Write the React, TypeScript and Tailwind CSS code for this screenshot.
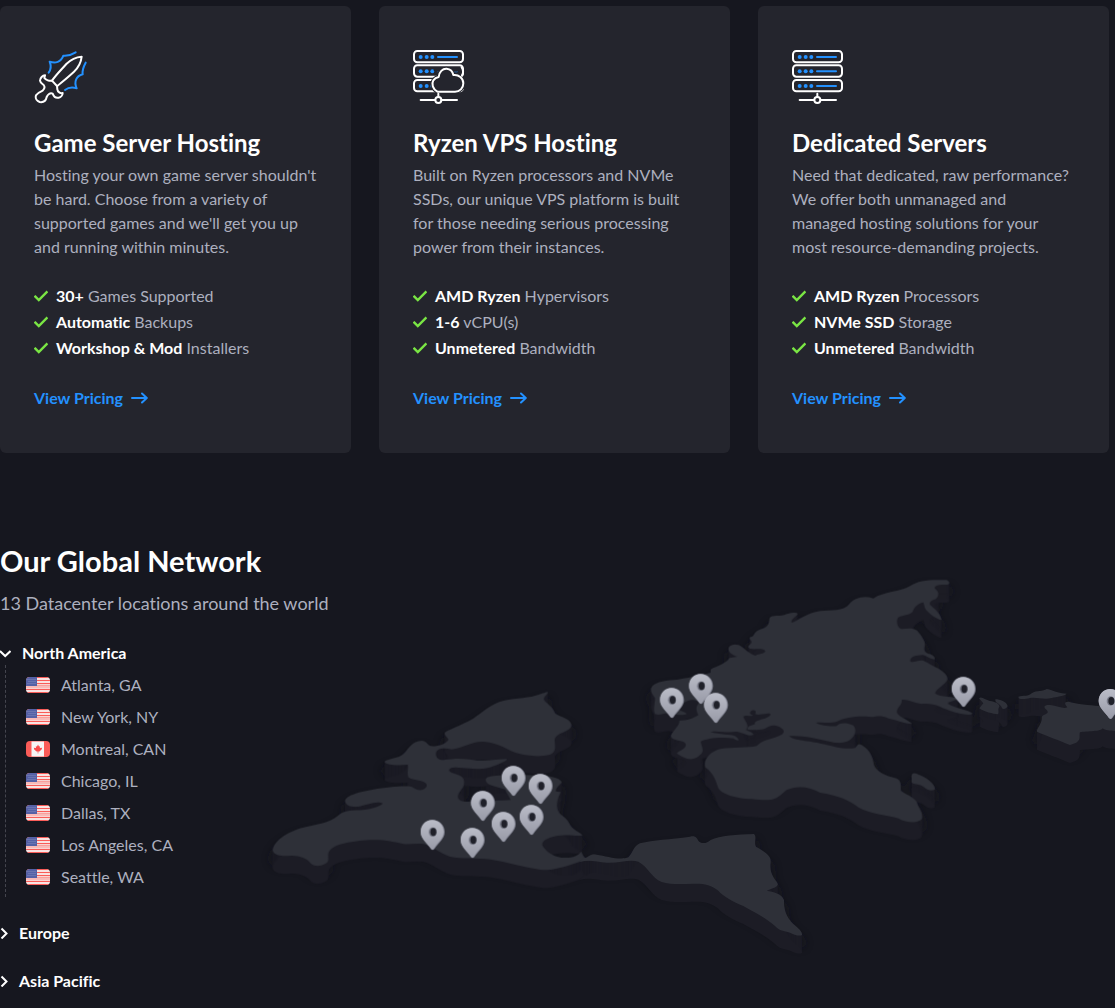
import { useState } from 'react';
import type { ReactNode } from 'react';

interface Feature {
  strong: string;
  rest: string;
}

interface Plan {
  title: string;
  icon: ReactNode;
  description: string;
  features: Feature[];
}

interface Region {
  name: string;
  locations: { city: string; country: 'us' | 'ca' }[];
}

function SwordIcon() {
  return (
    <svg viewBox="102 150 162 162" className="h-[54px] w-[54px]" fill="none" strokeWidth="6" strokeLinecap="round" strokeLinejoin="round" aria-hidden="true">
      <g stroke="#2391ff">
        <path d="M146 218C153 209 154 198 149 185C166 191 183 187 190 167C202 168 216 164 227 157" />
        <path d="M257 188C251 199 246 211 248 223C229 228 221 245 230 265C217 261 204 263 195 270" />
      </g>
      <g stroke="#ffffff">
        <path d="M156 242C170 222 185 208 199 192C211 180 228 171 245 170C243 188 235 203 222 215C207 229 191 242 172 258" />
        <path d="M135 226C128 226 120 234 120 242C121 249 127 252 131 255C135 260 134 266 128 272C121 275 113 278 108 286C105 295 111 303 119 306C131 308 138 301 140 291C143 284 150 277 158 281C161 289 168 295 176 293C183 292 188 285 188 279C181 281 173 276 172 268L171 258L156 242C149 244 137 240 133 234Z" />
      </g>
    </svg>
  );
}

function ServerRow({ y }: { y: number }) {
  return (
    <>
      <rect x="2" y={y} width="147" height="34" rx="10" stroke="#ffffff" />
      <path d={`M74 ${y + 18}H131`} stroke="#2391ff" />
      <g fill="#2391ff">
        <circle cx="22" cy={y + 18} r="6" />
        <circle cx="40" cy={y + 18} r="6" />
        <circle cx="57" cy={y + 18} r="6" />
      </g>
    </>
  );
}

function ServerIcon({ cloud = false }: { cloud?: boolean }) {
  return (
    <svg viewBox="-1 0 156 162" className="h-[54px] w-[52px]" fill="none" strokeWidth="6" strokeLinecap="round" strokeLinejoin="round" aria-hidden="true">
      <ServerRow y={3} />
      <ServerRow y={46} />
      <ServerRow y={90} />
      {cloud && (
        <>
          <path d="M72 125C58 117 54 102 60 91C64 85 70 82 76 81C77 66 88 55 100 56C111 57 118 65 120 75C136 73 150 84 150 100C150 115 139 125 125 125Z" fill="#24252d" stroke="#24252d" strokeWidth="12" />
          <path d="M66 61H131" stroke="#24252d" strokeWidth="9" />
          <path d="M145 52C150 60 150 70 146 77" stroke="#ffffff" />
          <path d="M72 125C58 117 54 102 60 91C64 85 70 82 76 81C77 66 88 55 100 56C111 57 118 65 120 75C136 73 150 84 150 100C150 115 139 125 125 125Z" stroke="#ffffff" />
        </>
      )}
      <g stroke="#ffffff">
        <path d="M75 131V140M22 150H65M85 150H131" />
        <circle cx="75" cy="150" r="9" />
      </g>
    </svg>
  );
}

const PLANS: Plan[] = [
  {
    title: 'Game Server Hosting',
    icon: <SwordIcon />,
    description: "Hosting your own game server shouldn't be hard. Choose from a variety of supported games and we'll get you up and running within minutes.",
    features: [
      { strong: '30+', rest: 'Games Supported' },
      { strong: 'Automatic', rest: 'Backups' },
      { strong: 'Workshop & Mod', rest: 'Installers' },
    ],
  },
  {
    title: 'Ryzen VPS Hosting',
    icon: <ServerIcon cloud />,
    description: 'Built on Ryzen processors and NVMe SSDs, our unique VPS platform is built for those needing serious processing power from their instances.',
    features: [
      { strong: 'AMD Ryzen', rest: 'Hypervisors' },
      { strong: '1-6', rest: 'vCPU(s)' },
      { strong: 'Unmetered', rest: 'Bandwidth' },
    ],
  },
  {
    title: 'Dedicated Servers',
    icon: <ServerIcon />,
    description: 'Need that dedicated, raw performance? We offer both unmanaged and managed\u00a0hosting solutions for your most\u00a0resource-demanding projects.',
    features: [
      { strong: 'AMD Ryzen', rest: 'Processors' },
      { strong: 'NVMe SSD', rest: 'Storage' },
      { strong: 'Unmetered', rest: 'Bandwidth' },
    ],
  },
];

const REGIONS: Region[] = [
  {
    name: 'North America',
    locations: [
      { city: 'Atlanta, GA', country: 'us' },
      { city: 'New York, NY', country: 'us' },
      { city: 'Montreal, CAN', country: 'ca' },
      { city: 'Chicago, IL', country: 'us' },
      { city: 'Dallas, TX', country: 'us' },
      { city: 'Los Angeles, CA', country: 'us' },
      { city: 'Seattle, WA', country: 'us' },
    ],
  },
  { name: 'Europe', locations: [] },
  { name: 'Asia Pacific', locations: [] },
];

function PlanCard({ plan }: { plan: Plan }) {
  return (
    <article className="rounded-md bg-[#24252d] px-[34px] pt-11 pb-[43px]">
      {plan.icon}
      <h3 className="mt-6 text-2xl leading-[30px] font-bold text-white">{plan.title}</h3>
      <p className="mt-[5px] text-base leading-6">{plan.description}</p>
      <ul className="mt-6 leading-[26px]">
        {plan.features.map(f => (
          <li key={f.strong} className="flex items-center gap-2">
            <svg viewBox="0 0 14 12" className="h-3 w-3.5 shrink-0" fill="none" stroke="#7ae644" strokeWidth="2.4" strokeLinecap="square" aria-hidden="true">
              <path d="M1.4 6.6L4.8 10L12.6 2.2" />
            </svg>
            <span>
              <strong className="font-bold text-white">{f.strong}</strong> {f.rest}
            </span>
          </li>
        ))}
      </ul>
      <a href="#pricing" className="mt-[25px] inline-flex items-center gap-2 leading-6 font-bold text-[#2391ff]">
        View Pricing
        <svg viewBox="0 0 17 12" className="h-3 w-[17px]" fill="none" stroke="currentColor" strokeWidth="2" strokeLinecap="round" strokeLinejoin="round" aria-hidden="true">
          <path d="M1 6H15.5M11 1.5L15.8 6L11 10.5" />
        </svg>
      </a>
    </article>
  );
}

function Flag({ country }: { country: 'us' | 'ca' }) {
  if (country === 'ca') {
    return (
      <svg viewBox="0 0 24 16" className="h-4 w-6 overflow-hidden rounded-sm" aria-hidden="true">
        <path d="M0 0H24V16H0Z" fill="#fa5c58" />
        <path d="M5.5 0.5H18V15.5H5.5Z" fill="#f5f5f5" />
        <path d="M12 3.5L13 5.5L14 5.2L13.8 7L16.2 6.8L15.6 8.6L13.4 10.4H12.3V12.5H11.7V10.4H10.6L8.2 8.6L7.8 6.8L10 7L9.8 5.2L11 5.5Z" fill="#fa4a4a" />
      </svg>
    );
  }
  return (
    <svg viewBox="0 0 24 16" className="h-4 w-6 overflow-hidden rounded-sm" aria-hidden="true">
      <path d="M0 0H24V16H0Z" fill="#f8d4d2" />
      <path d="M0 0.5H24M0 3.5H24M0 6.5H24M0 12.5H24M0 15.5H24" stroke="#fa5c58" />
      <path d="M0 8.5H24M0 10H24" stroke="#f9a09d" />
      <path d="M0 14H24M11 2H24M11 5H24" stroke="#faf0f0" />
      <path d="M0 0H11V9H0Z" fill="#5561a6" />
      <path d="M1.5 2.5H10M2.5 4.5H10M1.5 6.5H10" stroke="#8088bd" strokeDasharray="1 1" />
    </svg>
  );
}

// Land outlines, drawn in thirds of a pixel
const NORTH_AMERICA =
  'M38 512C40 480 90 450 140 440C190 430 215 425 240 402C255 388 290 392 320 388C345 384 365 375 368 370C350 362 320 376 295 380C275 382 256 378 255 362C258 345 300 335 340 328C380 322 430 316 455 320C465 325 470 332 485 330C500 326 505 315 495 308C480 298 455 300 445 292C440 280 446 265 443 254C420 256 380 258 373 245C385 235 415 236 430 222C445 208 455 182 485 182C500 183 503 195 512 198C530 200 560 192 565 178C560 170 552 165 554 158C560 150 600 138 640 115C670 95 695 70 730 62C770 53 810 54 835 44C848 40 862 35 863 36C865 42 850 50 852 58C855 68 875 75 883 95C885 108 915 108 930 125C938 135 935 145 920 152C905 160 885 165 884 180C885 200 890 215 870 224C850 230 815 230 780 222C740 212 720 188 670 185C630 185 610 205 575 208C555 205 535 202 528 218C526 232 535 240 550 240C575 236 600 234 630 238C670 246 710 238 740 237C745 240 720 252 690 262C660 270 630 266 605 264C585 261 570 262 567 270C568 280 590 280 605 290C615 298 613 310 610 320C600 335 590 345 595 355C600 365 615 366 630 364C680 362 720 362 752 360C748 350 740 340 735 328C715 322 690 318 680 308C672 296 680 290 700 288C740 284 800 284 860 288C890 292 905 300 905 308C895 318 885 328 888 334L902 336C900 345 888 360 892 385C895 405 920 410 928 430C935 448 960 455 968 466C950 470 920 462 890 468C860 474 842 485 848 498C858 515 880 530 905 533C935 535 955 528 963 515C968 520 970 533 978 534C985 530 988 524 1005 524L1005 540C985 541 975 542 960 545C920 560 870 574 840 569C790 562 740 545 690 538C650 533 600 538 570 530C540 520 510 495 490 492C470 488 450 495 430 492C400 485 370 478 330 480C280 484 215 490 205 520C203 535 210 545 195 552C180 560 160 560 150 548C140 535 120 528 95 527C70 528 45 530 38 512Z';
const SOUTH_AMERICA =
  'M10 264L18 264C28 260 32 252 50 254C80 258 120 272 145 262C158 250 160 228 180 220C220 210 270 208 330 200C348 196 350 205 355 212C362 222 380 222 392 210C420 196 470 194 522 192C532 200 520 218 528 230C545 240 575 255 572 275C568 300 575 315 592 338C600 350 575 355 560 362C580 366 605 370 612 390C612 420 618 440 640 462C655 475 668 485 666 495C660 500 640 494 630 488C610 482 600 484 585 468C560 445 520 425 490 408C460 395 430 380 415 362C395 345 370 340 340 341C310 342 275 345 245 336C215 325 205 290 175 275C150 266 120 280 80 278C50 276 30 268 0 275Z';
const EURASIA =
  'M33 355C38 338 70 332 100 330C140 325 180 315 212 308L212 298C230 288 260 280 268 264L292 260C275 255 262 245 266 232C275 220 295 222 305 230C318 240 335 255 347 257C350 250 365 255 376 244C370 232 345 240 330 236C320 230 325 228 333 220C340 210 318 205 335 200C345 195 340 185 360 178C380 172 388 165 388 145C395 132 420 142 440 132C455 128 472 126 473 132C470 140 450 150 455 158C475 152 500 128 540 123C570 120 610 125 628 102C640 85 670 75 700 85C730 65 780 65 810 48C835 30 870 28 920 30C932 36 930 44 918 44C900 44 880 46 885 56C900 65 898 85 880 90C870 94 868 100 870 104C880 115 900 125 905 150C890 148 865 130 855 115L850 97C840 98 825 108 820 120C818 135 790 135 775 142C768 150 770 172 785 177C800 175 820 172 832 182C842 195 855 210 855 225C850 240 853 248 870 252C880 256 886 262 884 268C870 268 860 258 848 255C830 256 808 260 811 274C820 280 835 268 850 272C865 278 880 290 895 295C910 305 925 315 922 330C915 345 890 355 885 370C900 382 945 378 955 386C940 395 920 395 925 402C945 415 985 420 998 430C990 442 930 425 900 410C880 402 860 400 845 402C820 398 795 385 785 390C788 405 768 415 771 428C775 440 815 455 816 462C790 460 770 450 745 445C720 435 710 440 700 441C670 437 620 438 590 455C570 462 545 455 528 458C545 468 575 470 590 468C595 460 615 455 640 466C652 480 645 500 630 510C610 522 590 520 570 515C530 505 480 495 448 498C455 510 500 512 540 520C580 528 615 540 645 534C652 525 655 518 665 525C690 540 698 560 702 585C710 605 735 618 770 625C785 632 782 645 783 662C795 672 820 680 830 695C835 715 850 725 846 745C838 760 800 760 775 745C740 735 690 732 655 712C625 690 600 678 540 668C510 650 470 645 440 660C425 672 410 690 385 690C340 688 260 688 235 655C228 635 222 610 196 592C188 570 210 545 240 537C280 530 320 535 350 528C365 512 385 508 405 502C430 495 438 485 425 475C405 462 395 465 375 476C350 482 330 480 322 478C325 465 330 470 345 462C340 455 355 450 375 445C395 438 395 430 385 430C365 432 355 436 345 432C350 424 345 418 335 422C326 428 330 434 340 436C330 442 320 432 310 440C315 455 330 465 318 480C330 485 342 490 340 495C325 500 315 490 290 485C260 490 225 480 212 486C240 495 275 492 285 498C300 508 300 518 280 505C240 500 200 505 182 515C185 530 195 545 180 555C165 572 140 572 110 550C120 540 140 535 137 522C130 508 95 515 92 498C100 480 120 465 118 452C140 452 160 445 175 435C168 425 165 405 180 398C165 385 145 388 130 400L108 412C120 425 140 425 140 432C125 440 100 430 90 430C70 428 60 438 45 432C38 420 45 400 45 385C40 375 32 370 33 355Z';
const MADAGASCAR = 'M815 625C812 610 820 606 835 613C860 622 885 640 885 658C875 665 860 660 850 650C840 642 825 645 815 638Z';
const ISLANDS =
  'M237 385C245 378 255 390 270 393C285 395 300 402 298 410C292 418 298 425 294 433C280 432 250 425 238 415L250 400ZM286 388C300 388 320 395 323 408C320 418 305 420 305 412C300 400 285 400 286 388ZM355 380C370 376 385 380 395 370C410 360 430 365 440 357C455 358 460 368 500 371C495 378 470 380 455 384C430 390 410 380 390 384C375 388 355 390 355 380ZM411 480C415 470 428 455 425 440C435 430 450 432 440 420C430 412 430 404 450 405C475 408 490 418 502 412C495 402 490 396 505 395C530 402 570 405 597 408L645 415L645 483C630 482 615 482 608 475C605 485 560 483 540 487C535 500 550 515 510 525C480 512 440 498 411 485Z';

const PINS = [
  [761, 588], [842, 612], [669, 663], [815, 705], [731, 726], [518, 750], [638, 774],
  [1323, 312], [1236, 354], [1368, 369], [2111, 321], [2552, 357],
];

const WALL_STEPS = Array.from({ length: 18 }, (_, i) => (i + 1) * 3);

function WorldMap() {
  return (
    <svg viewBox="0 0 2565 1200" className="block h-auto w-full" role="img" aria-label="Datacenter map">
      <defs>
        <g id="land">
          <path d={NORTH_AMERICA} transform="translate(0 330)" />
          <path d={SOUTH_AMERICA} transform="translate(960 600)" />
          <path d={EURASIA} transform="translate(1140 0)" />
          <path d={MADAGASCAR} transform="translate(1140 0)" />
          <path d={ISLANDS} transform="translate(1920 0)" />
        </g>
        <linearGradient id="pin" x1="0" y1="0" x2="0" y2="1">
          <stop offset="0" stopColor="#bbbdc8" />
          <stop offset="1" stopColor="#999ba8" />
        </linearGradient>
        <filter id="shade" x="-5%" y="-5%" width="110%" height="110%">
          <feGaussianBlur stdDeviation="12" />
        </filter>
      </defs>
      <use href="#land" y="27" fill="#13131d" stroke="#13131d" strokeWidth="16" opacity="0.6" filter="url(#shade)" />
      <g fill="#1c1c25">
        {WALL_STEPS.map(dy => (
          <use key={dy} href="#land" y={dy} />
        ))}
      </g>
      <use href="#land" fill="#2e3038" />
      {PINS.map(([x, y]) => (
        <g key={`${x}-${y}`} transform={`translate(${x} ${y})`}>
          <path d="M0 0C20 0 36 15 36 36C36 57 17 68 5 87Q0 93 -5 87C-17 68 -36 57 -36 36C-36 15 -20 0 0 0Z" fill="#858796" />
          <path d="M-2 0C18 0 33 15 33 36C33 56 14 68 3 87Q0 91 -5 87C-17 68 -36 57 -36 36C-36 15 -22 0 -2 0Z" fill="url(#pin)" />
          <ellipse cx="0" cy="36" rx="12" ry="14" fill="#777987" />
          <ellipse cx="2" cy="36" rx="9" ry="12" fill="#1f2029" />
        </g>
      ))}
    </svg>
  );
}

export default function App() {
  const [openRegion, setOpenRegion] = useState<string | null>('North America');

  return (
    <main className="min-h-screen overflow-hidden bg-[#16171f] font-['Lato',sans-serif] text-base text-[#adb0bf] [font-variant-ligatures:none]">
      <section className="grid grid-cols-3 gap-7 pt-1.5 pr-1.5">
        {PLANS.map(plan => (
          <PlanCard key={plan.title} plan={plan} />
        ))}
      </section>

      <section className="flex pt-[90px]">
        <div className="w-[260px] shrink-0">
          <h2 className="text-[29px] leading-9 font-bold whitespace-nowrap text-white">Our Global Network</h2>
          <p className="mt-3 text-lg leading-6 whitespace-nowrap">13 Datacenter locations around the world</p>

          <div className="mt-[26px] flex flex-col gap-6">
            {REGIONS.map(region => {
              const isOpen = openRegion === region.name;
              return (
                <div key={region.name}>
                  <button
                    type="button"
                    aria-expanded={isOpen}
                    onClick={() => setOpenRegion(isOpen ? null : region.name)}
                    className="flex cursor-pointer items-center gap-[11px] leading-6 font-bold text-white"
                  >
                    {isOpen ? (
                      <svg viewBox="0 0 11 12" className="h-3 w-[11px]" fill="none" stroke="currentColor" strokeWidth="2" aria-hidden="true">
                        <path d="M0 4L5.2 9L10.5 4" />
                      </svg>
                    ) : (
                      <svg viewBox="0 0 8 12" className="h-3 w-2" fill="none" stroke="currentColor" strokeWidth="2" aria-hidden="true">
                        <path d="M1.5 1.5L6.5 6.5L1.5 11.5" />
                      </svg>
                    )}
                    {region.name}
                  </button>
                  {isOpen && region.locations.length > 0 && (
                    <ul className="ml-[5px] border-l border-dashed border-[#44454e] pt-0.5 pb-1.5 pl-5">
                      {region.locations.map(loc => (
                        <li key={loc.city} className="flex h-8 items-center gap-[11px] pt-1">
                          <Flag country={loc.country} />
                          {loc.city}
                        </li>
                      ))}
                    </ul>
                  )}
                </div>
              );
            })}
          </div>
        </div>
        <div className="min-w-0 flex-1 pt-[27px]">
          <WorldMap />
        </div>
      </section>
    </main>
  );
}
